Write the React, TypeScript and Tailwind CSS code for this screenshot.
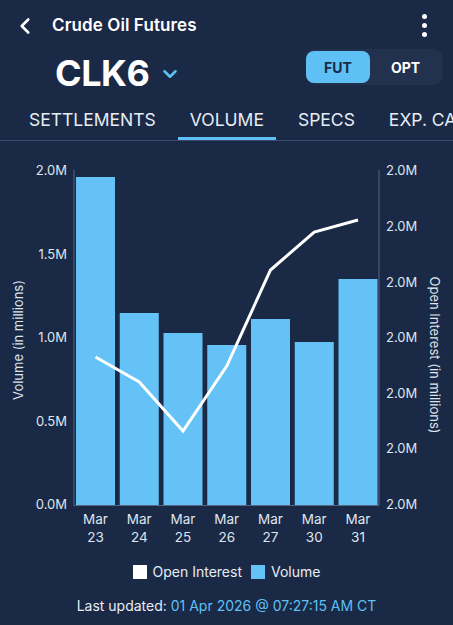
import { ChevronLeft, ChevronDown } from 'lucide-react';

const bars = [
  { d: '23', top: 177, oi: 357 },
  { d: '24', top: 313, oi: 382 },
  { d: '25', top: 333, oi: 431 },
  { d: '26', top: 345, oi: 366 },
  { d: '27', top: 319, oi: 270 },
  { d: '30', top: 342, oi: 232 },
  { d: '31', top: 279, oi: 220 }
];

const leftTicks = [
  { label: '2.0M', y: 170 },
  { label: '1.5M', y: 253.5 },
  { label: '1.0M', y: 337 },
  { label: '0.5M', y: 420.5 },
  { label: '0.0M', y: 504 }
];

const rightTicks = [170, 226, 281.5, 337, 392.5, 448, 504];

const tabs = ['SETTLEMENTS', 'VOLUME', 'SPECS', 'EXP. CALENDAR'];

const Chart = () => {
  const x0 = 76;
  const step = 43.75;
  const bw = 39;
  const points = bars.map((b, i) => `${x0 + i * step + bw / 2},${b.oi}`).join(' ');

  return (
    <svg width={453} height={414} viewBox="0 141 453 414" className="block">
      <g fontFamily="Inter, sans-serif" fontSize={13} fill="#dfe5ee">
        {leftTicks.map((t) => (
          <text key={t.label} x={67} y={t.y} textAnchor="end" dominantBaseline="central">
            {t.label}
          </text>
        ))}
        {rightTicks.map((y) => (
          <text key={y} x={386} y={y} dominantBaseline="central">
            2.0M
          </text>
        ))}
        <text
          x={18}
          y={340}
          textAnchor="middle"
          dominantBaseline="central"
          transform="rotate(-90 18 340)"
        >
          Volume (in millions)
        </text>
        <text
          x={435}
          y={355}
          textAnchor="middle"
          dominantBaseline="central"
          transform="rotate(90 435 355)"
        >
          Open Interest (in millions)
        </text>
        {bars.map((b, i) => {
          const cx = x0 + i * step + bw / 2;
          return (
            <g key={b.d} textAnchor="middle" fontSize={13.5}>
              <text x={cx} y={519} dominantBaseline="central">
                Mar
              </text>
              <text x={cx} y={537} dominantBaseline="central">
                {b.d}
              </text>
            </g>
          );
        })}
      </g>
      {bars.map((b, i) => (
        <rect
          key={b.d}
          x={x0 + i * step}
          y={b.top}
          width={bw}
          height={505 - b.top}
          fill="#64c2f7"
        />
      ))}
      <line x1={74} y1={170} x2={74} y2={505.5} stroke="#566683" strokeWidth={1} />
      <line x1={379} y1={170} x2={379} y2={505.5} stroke="#566683" strokeWidth={1} />
      <line x1={74} y1={505.5} x2={379} y2={505.5} stroke="#566683" strokeWidth={1} />
      <polyline
        points={points}
        fill="none"
        stroke="#ffffff"
        strokeWidth={3}
        strokeLinejoin="miter"
      />
    </svg>
  );
};

export default function App() {
  return (
    <div
      className="h-[625px] w-[453px] overflow-hidden bg-[#1a2946] text-white"
      style={{ fontFamily: 'Inter, "Noto Sans", sans-serif' }}
    >
      <div className="flex h-12 items-center justify-between pl-[12px] pr-[26px] pt-[3px]">
        <div className="flex items-center gap-[14px]">
          <ChevronLeft size={26} strokeWidth={2.4} className="text-white" />
          <span className="text-[17px] font-semibold tracking-[0.1px]">Crude Oil Futures</span>
        </div>
        <div className="flex flex-col items-center gap-[4px]">
          <span className="h-[5px] w-[5px] rounded-full bg-white" />
          <span className="h-[5px] w-[5px] rounded-full bg-white" />
          <span className="h-[5px] w-[5px] rounded-full bg-white" />
        </div>
      </div>

      <div className="flex h-[47px] items-center justify-between pl-[55px] pr-[10px]">
        <div className="mt-[3px] flex items-center gap-[10px]">
          <span className="text-[36px] font-bold leading-none tracking-[-0.5px]">CLK6</span>
          <ChevronDown size={22} strokeWidth={2.8} className="mt-[2px] text-[#5ec0f5]" />
        </div>
        <div className="mb-[9px] flex h-[36px] w-[137px] items-center rounded-[10px] bg-[#22314e] py-[2px] pr-[2px]">
          <div className="flex h-full w-[64px] items-center justify-center rounded-[8px] bg-[#5ec0f5] text-[14px] font-bold text-[#1a2946]">
            FUT
          </div>
          <div className="flex h-full flex-1 items-center justify-center text-[14px] font-bold text-white">
            OPT
          </div>
        </div>
      </div>

      <div className="relative h-[46px] border-b border-[#3b4b69]">
        <div className="flex h-full items-stretch gap-[10px] whitespace-nowrap pl-[17px]">
          {tabs.map((t) => (
            <div
              key={t}
              className={`flex items-center px-3 text-[17.5px] text-[#e8edf4] ${
                t === 'VOLUME' ? 'border-b-[3px] border-[#5ec0f5] pt-[9px]' : 'pt-[6px]'
              }`}
            >
              {t}
            </div>
          ))}
        </div>
      </div>

      <Chart />

      <div className="mt-[6px] flex items-center justify-center gap-[6px] text-[14px] text-[#e8edf4]">
        <span className="h-[14px] w-[14px] bg-white" />
        <span>Open Interest</span>
        <span className="ml-[3px] h-[14px] w-[14px] bg-[#64c2f7]" />
        <span>Volume</span>
      </div>

      <div className="mt-[13px] text-center text-[14px] text-[#e8edf4]">
        Last updated: <span className="text-[#5ec0f5]">01 Apr 2026 @ 07:27:15 AM CT</span>
      </div>
    </div>
  );
}
